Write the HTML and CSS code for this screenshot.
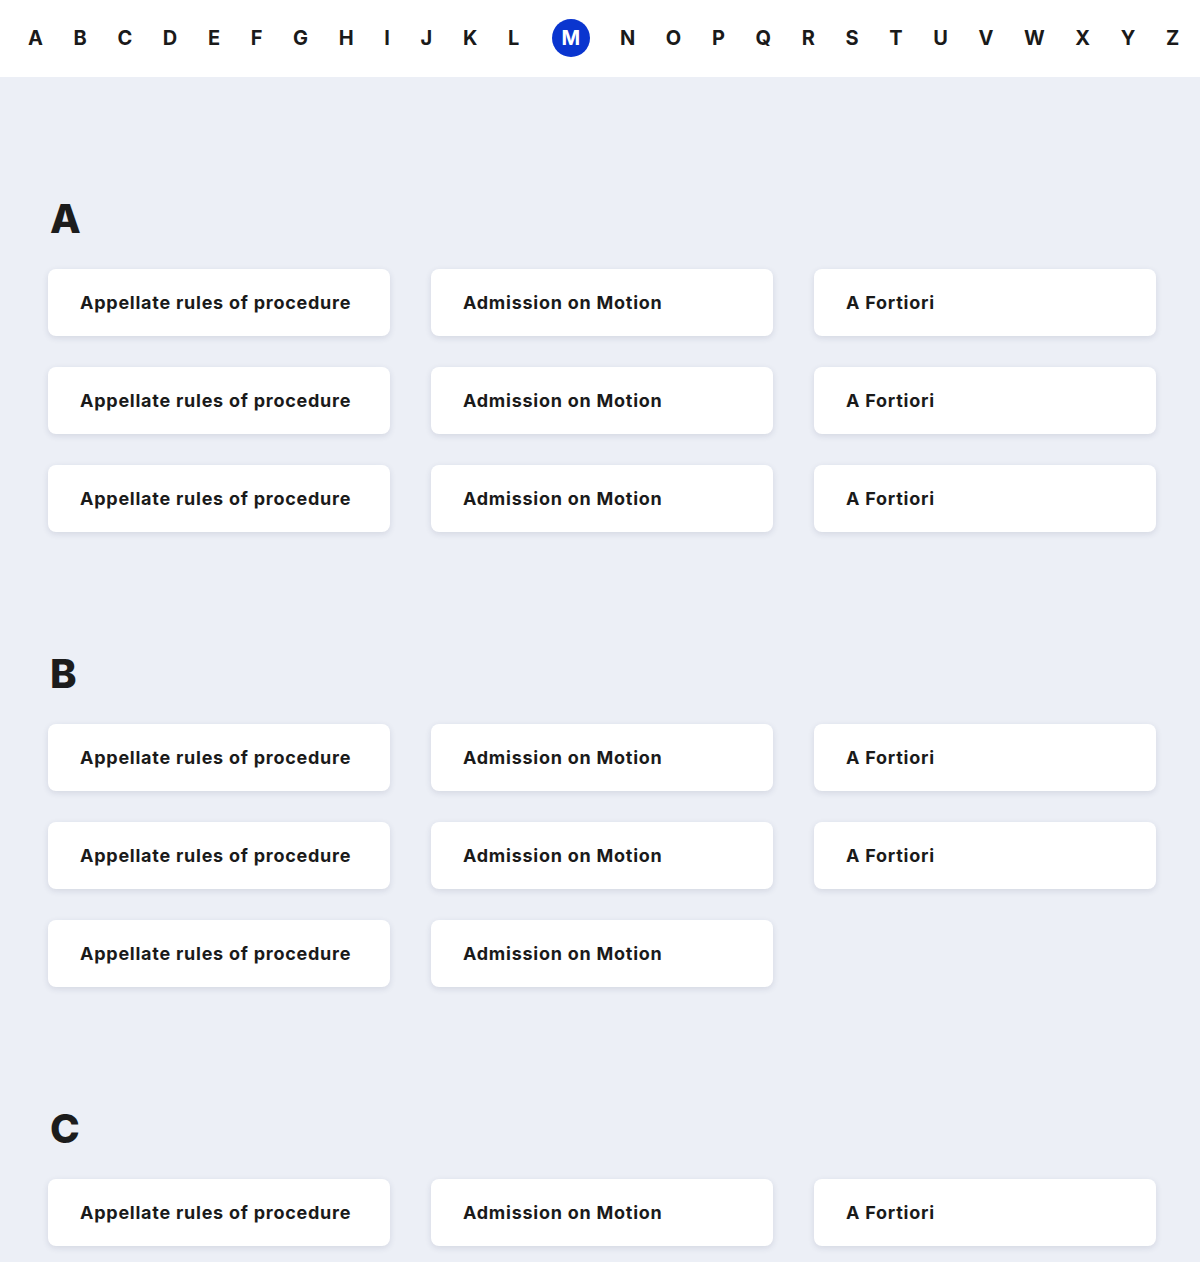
FILE: index.html
```html
<!DOCTYPE html>
<html lang="en">
<head>
<meta charset="utf-8">
<title>Glossary</title>
<link rel="stylesheet" href="styles.css">
</head>
<body>
<header class="alpha-bar">
  <nav class="alpha-nav">
    <a class="alpha-link" href="#a">A</a>
    <a class="alpha-link" href="#b">B</a>
    <a class="alpha-link" href="#c">C</a>
    <a class="alpha-link" href="#">D</a>
    <a class="alpha-link" href="#">E</a>
    <a class="alpha-link" href="#">F</a>
    <a class="alpha-link" href="#">G</a>
    <a class="alpha-link" href="#">H</a>
    <a class="alpha-link" href="#">I</a>
    <a class="alpha-link" href="#">J</a>
    <a class="alpha-link" href="#">K</a>
    <a class="alpha-link" href="#">L</a>
    <a class="alpha-link is-active" href="#">M</a>
    <a class="alpha-link" href="#">N</a>
    <a class="alpha-link" href="#">O</a>
    <a class="alpha-link" href="#">P</a>
    <a class="alpha-link" href="#">Q</a>
    <a class="alpha-link" href="#">R</a>
    <a class="alpha-link" href="#">S</a>
    <a class="alpha-link" href="#">T</a>
    <a class="alpha-link" href="#">U</a>
    <a class="alpha-link" href="#">V</a>
    <a class="alpha-link" href="#">W</a>
    <a class="alpha-link" href="#">X</a>
    <a class="alpha-link" href="#">Y</a>
    <a class="alpha-link" href="#">Z</a>
  </nav>
</header>
<main class="glossary">
  <section class="letter-section" id="a">
    <h2 class="letter-heading">A</h2>
    <div class="term-grid">
      <a class="term-card" href="#">Appellate rules of procedure</a>
      <a class="term-card" href="#">Admission on Motion</a>
      <a class="term-card" href="#">A Fortiori</a>
      <a class="term-card" href="#">Appellate rules of procedure</a>
      <a class="term-card" href="#">Admission on Motion</a>
      <a class="term-card" href="#">A Fortiori</a>
      <a class="term-card" href="#">Appellate rules of procedure</a>
      <a class="term-card" href="#">Admission on Motion</a>
      <a class="term-card" href="#">A Fortiori</a>
    </div>
  </section>
  <section class="letter-section" id="b">
    <h2 class="letter-heading">B</h2>
    <div class="term-grid">
      <a class="term-card" href="#">Appellate rules of procedure</a>
      <a class="term-card" href="#">Admission on Motion</a>
      <a class="term-card" href="#">A Fortiori</a>
      <a class="term-card" href="#">Appellate rules of procedure</a>
      <a class="term-card" href="#">Admission on Motion</a>
      <a class="term-card" href="#">A Fortiori</a>
      <a class="term-card" href="#">Appellate rules of procedure</a>
      <a class="term-card" href="#">Admission on Motion</a>
    </div>
  </section>
  <section class="letter-section" id="c">
    <h2 class="letter-heading">C</h2>
    <div class="term-grid">
      <a class="term-card" href="#">Appellate rules of procedure</a>
      <a class="term-card" href="#">Admission on Motion</a>
      <a class="term-card" href="#">A Fortiori</a>
    </div>
  </section>
</main>
</body>
</html>
```

FILE: styles.css
```css
* { box-sizing: border-box; }

html, body {
  margin: 0;
  padding: 0;
}

body {
  background: #eceff6;
  font-family: Inter, "Noto Sans", "Liberation Sans", sans-serif;
  color: #1a1a1a;
}

.alpha-bar {
  background: #ffffff;
  height: 77px;
  display: flex;
  align-items: center;
}

.alpha-nav {
  flex: 1;
  display: flex;
  justify-content: space-between;
  align-items: center;
  padding: 0 20px 0 28px;
  margin-top: -2px;
}

.alpha-link {
  font-size: 20px;
  font-weight: 700;
  color: #1a1a1a;
  text-decoration: none;
  line-height: 38px;
  letter-spacing: 0.5px;
}

.alpha-link.is-active {
  width: 38px;
  height: 38px;
  border-radius: 50%;
  background: #0a35cf;
  color: #ffffff;
  text-align: center;
  letter-spacing: 0;
  margin-left: 2px;
}

.glossary {
  padding: 0 44px 20px 48px;
}

.letter-section {
  padding-top: 122px;
}

.letter-heading {
  margin: 0 0 30px 2px;
  font-size: 40px;
  line-height: 40px;
  font-weight: 800;
  color: #1c1c1c;
}

.term-grid {
  display: grid;
  grid-template-columns: repeat(3, 342px);
  column-gap: 41px;
  row-gap: 31px;
}

.term-card {
  display: flex;
  align-items: center;
  height: 67px;
  padding: 0 32px;
  background: #ffffff;
  border-radius: 8px;
  box-shadow: 0 2px 6px rgba(30, 40, 80, 0.12);
  font-size: 18px;
  font-weight: 700;
  letter-spacing: 0.75px;
  color: #1a1a1a;
  text-decoration: none;
}
```
